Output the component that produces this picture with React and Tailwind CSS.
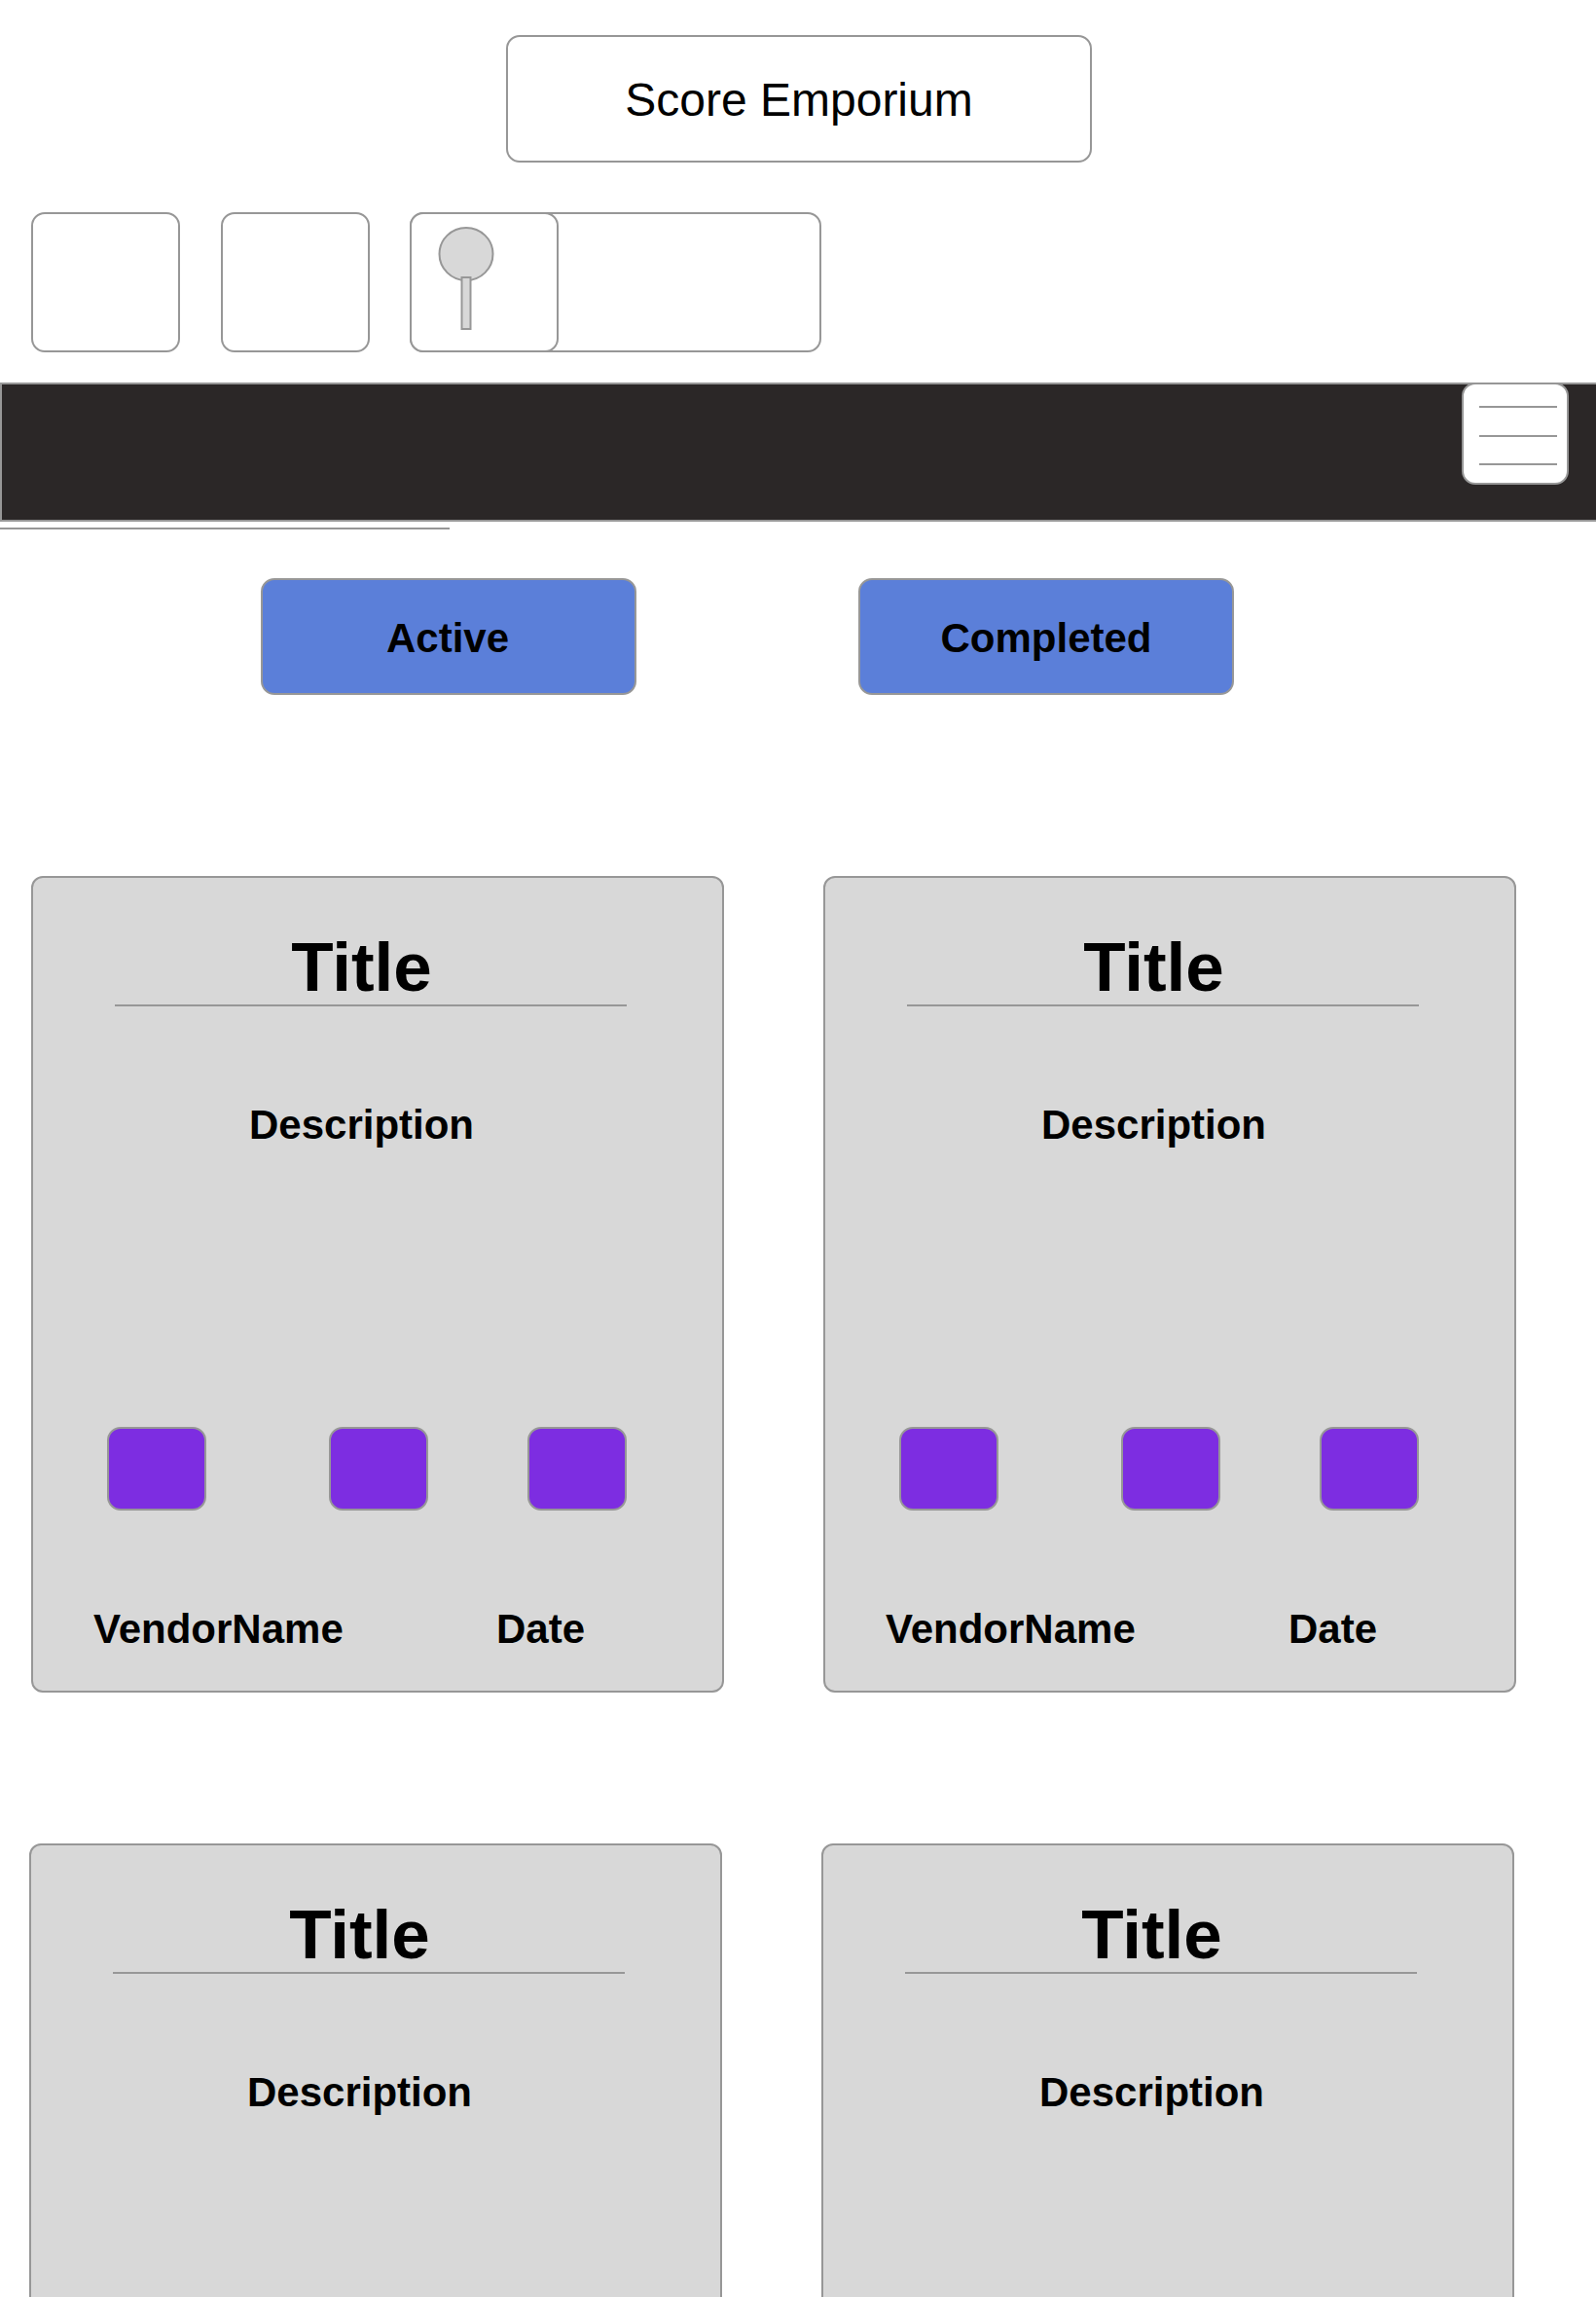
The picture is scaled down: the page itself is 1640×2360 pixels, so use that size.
function Card({ showFooter = true }) {
  return (
    <div className="w-[712px] h-[839px] shrink-0 bg-[#d8d8d8] border-2 border-[#979797] rounded-[12px] text-black font-bold">
      <div className="ml-[84px] mt-[57px] w-[526px] h-[75px] border-b-2 border-[#979797] pr-[19px] text-center text-[71px] leading-[70px]">
        Title
      </div>
      <div className="mt-[98px] w-[675px] text-center text-[42px] leading-[48px]">Description</div>
      {showFooter && (
        <>
          <div className="flex mt-[286px] ml-[76px]">
            <div className="w-[102px] h-[86px] bg-[#7d2de1] border-2 border-[#979797] rounded-[14px]" />
            <div className="w-[102px] h-[86px] ml-[126px] bg-[#7d2de1] border-2 border-[#979797] rounded-[14px]" />
            <div className="w-[102px] h-[86px] ml-[102px] bg-[#7d2de1] border-2 border-[#979797] rounded-[14px]" />
          </div>
          <div className="flex mt-[98px] ml-[62px] text-[42px] leading-[48px]">
            <span className="w-[414px]">VendorName</span>
            <span>Date</span>
          </div>
        </>
      )}
    </div>
  )
}

function IconBox({ children }) {
  return (
    <div className="w-[153px] h-[144px] shrink-0 bg-white border-2 border-[#979797] rounded-[14px]">{children}</div>
  )
}

export default function App() {
  return (
    <div className="w-[1640px] h-[2360px] overflow-hidden bg-white font-['Liberation_Sans',Arial,sans-serif]">
      <div className="pt-[36px] pl-[520px]">
        <div className="w-[602px] h-[131px] pt-[3px] flex items-center justify-center border-2 border-[#979797] rounded-[14px] text-[48px] text-black">
          Score Emporium
        </div>
      </div>

      <div className="flex mt-[51px] ml-[32px]">
        <IconBox />
        <div className="ml-[42px]">
          <IconBox />
        </div>
        <div className="ml-[41px] w-[423px] h-[144px] border-2 border-[#979797] rounded-[14px]">
          <div className="-m-[2px]">
            <IconBox>
              <svg width="60" height="108" viewBox="0 0 60 108" className="ml-[27px] mt-[13px]">
                <ellipse cx="29" cy="28" rx="27.5" ry="27" fill="#d8d8d8" stroke="#979797" strokeWidth="2" />
                <rect x="24.5" y="52" width="9" height="53" fill="#d8d8d8" stroke="#979797" strokeWidth="2" />
              </svg>
            </IconBox>
          </div>
        </div>
      </div>

      <div className="flex justify-end mt-[31px] h-[143px] bg-[#2b2727] border-y-2 border-l-2 border-[#979797] pr-[28px]">
        <div className="w-[110px] h-[105px] -mt-[2px] bg-white border-2 border-[#979797] rounded-[14px] flex flex-col gap-[27.5px] pt-[22px] pl-[16px]">
          <div className="w-[80px] h-[2px] bg-[#979797]" />
          <div className="w-[80px] h-[2px] bg-[#979797]" />
          <div className="w-[80px] h-[2px] bg-[#979797]" />
        </div>
      </div>
      <div className="w-[462px] h-[2px] mt-[6px] bg-[#979797]" />

      <div className="flex mt-[50px] ml-[268px] text-[42px] font-bold text-black">
        <button className="w-[386px] h-[120px] pt-[2px] pr-[2px] bg-[#5b7fd9] border-2 border-[#979797] rounded-[14px]">Active</button>
        <button className="w-[386px] h-[120px] pt-[2px] ml-[228px] bg-[#5b7fd9] border-2 border-[#979797] rounded-[14px]">Completed</button>
      </div>

      <div className="flex gap-[102px] mt-[186px] ml-[32px]">
        <Card />
        <Card />
      </div>
      <div className="flex gap-[102px] mt-[155px] ml-[30px]">
        <Card showFooter={false} />
        <Card showFooter={false} />
      </div>
    </div>
  )
}
